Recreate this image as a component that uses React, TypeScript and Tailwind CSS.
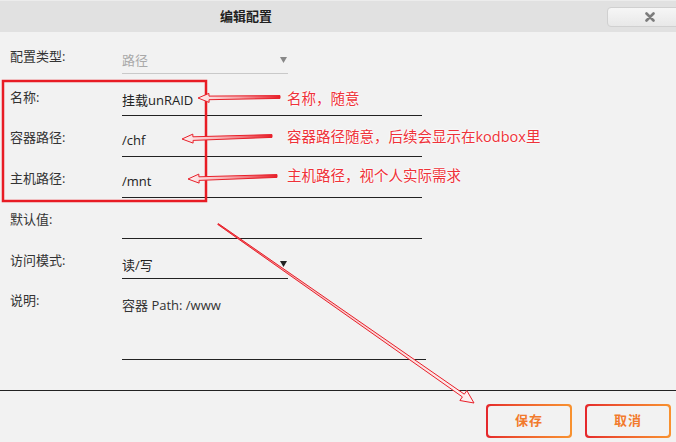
import type { ReactNode } from "react";

const FONT = {
  fontFamily: '"Open Sans", "Noto Sans CJK SC", "Liberation Sans", sans-serif',
};

type Pt = [number, number];

// hollow arrow: tip -> tail, tapering shaft
function arrowPoints(
  tip: Pt,
  tail: Pt,
  headLen: number,
  headHalf: number,
  shaftNear: number,
  shaftFar: number
) {
  const dx = tail[0] - tip[0];
  const dy = tail[1] - tip[1];
  const len = Math.hypot(dx, dy);
  const ux = dx / len;
  const uy = dy / len;
  const nx = -uy;
  const ny = ux;
  const bx = tip[0] + ux * headLen;
  const by = tip[1] + uy * headLen;
  const pts: Pt[] = [
    tip,
    [bx + nx * headHalf, by + ny * headHalf],
    [bx + nx * shaftNear, by + ny * shaftNear],
    [tail[0] + nx * shaftFar, tail[1] + ny * shaftFar],
    [tail[0] - nx * shaftFar, tail[1] - ny * shaftFar],
    [bx - nx * shaftNear, by - ny * shaftNear],
    [bx - nx * headHalf, by - ny * headHalf],
  ];
  return pts.map((p) => `${p[0].toFixed(1)},${p[1].toFixed(1)}`).join(" ");
}

function Arrow({ id, tip, tail, diag }: { id: string; tip: Pt; tail: Pt; diag?: boolean }) {
  return (
    <>
      <defs>
        <linearGradient
          id={id}
          gradientUnits="userSpaceOnUse"
          x1={tail[0]}
          y1={tail[1]}
          x2={tip[0]}
          y2={tip[1]}
        >
          <stop offset="0" stopColor={diag ? "#ec4a50" : "#e8202a"} />
          <stop offset={diag ? "0.35" : "0.5"} stopColor={diag ? "#f6c4c6" : "#f5a4a8"} />
          <stop offset="1" stopColor="#fdf1f1" />
        </linearGradient>
      </defs>
      <polygon
        points={
          diag
            ? arrowPoints(tip, tail, 13, 6, 1.7, 0.5)
            : arrowPoints(tip, tail, 11, 4.5, 1.8, 1.4)
        }
        fill={`url(#${id})`}
        stroke="#e8202a"
        strokeWidth={1}
        strokeLinejoin="miter"
      />
    </>
  );
}

function Note({ top, children }: { top: number; children: ReactNode }) {
  return (
    <div
      className="absolute left-[287px] text-[14.5px] leading-[18px] text-[#ee3239] [text-shadow:0_0_2px_#fff,0_0_3px_#fff,0_0_1px_#fff] whitespace-nowrap"
      style={{ top }}
    >
      {children}
    </div>
  );
}

function Caret({ color }: { color: string }) {
  return (
    <svg width="7" height="6" viewBox="0 0 7 6" className={color}>
      <path d="M0 0H7L3.5 6Z" fill="currentColor" />
    </svg>
  );
}

export default function App() {
  return (
    <div
      className="relative w-[676px] h-[442px] overflow-hidden bg-[#f2f2f2] text-[#333]"
      style={FONT}
    >
      {/* title bar */}
      <div className="h-[32px] flex items-center bg-[#e1e1e1] border-t border-[#ececec]">
        <div className="pl-[220px] text-[13px] font-semibold text-[#1f1f1f] leading-none">
          编辑配置
        </div>
        <button className="ml-auto -mr-[17px] shrink-0 w-[86px] h-[20px] rounded-[4px] border border-[#d0d0d0] bg-gradient-to-b from-[#f6f6f6] to-[#e8e8e8] flex items-center justify-center text-[#7c7c7c]">
          <svg width="10" height="10" viewBox="0 0 10 10">
            <path d="M1.5 1.5L8.5 8.5M8.5 1.5L1.5 8.5" stroke="currentColor" strokeWidth="2.6" strokeLinecap="round" />
          </svg>
        </button>
      </div>

      {/* form */}
      <div className="flex flex-col">
        <div className="flex h-[42px]">
          <div className="w-[122px] pl-[10px] pt-[16px] text-[13px] leading-[16px]">配置类型:</div>
          <div className="w-[166px] border-b border-[#c9c9c9] flex items-start justify-between pt-[20px] pr-[1px]">
            <span className="text-[13px] leading-[16px] text-[#a9a9a9]">路径</span>
            <span className="flex pt-[5px]">
              <Caret color="text-[#888]" />
            </span>
          </div>
        </div>

        <div className="flex h-[42px]">
          <div className="w-[122px] pl-[10px] pt-[15px] text-[13px] leading-[16px]">名称:</div>
          <div className="w-[300px] border-b border-[#222] pt-[18px] text-[13px] leading-[16px] text-[#222]">
            挂载unRAID
          </div>
        </div>

        <div className="flex h-[41px]">
          <div className="w-[122px] pl-[10px] pt-[13px] text-[13px] leading-[16px]">容器路径:</div>
          <div className="w-[300px] border-b border-[#222] pt-[16px] text-[13px] leading-[16px] text-[#222]">
            /chf
          </div>
        </div>

        <div className="flex h-[41px]">
          <div className="w-[122px] pl-[10px] pt-[13px] text-[13px] leading-[16px]">主机路径:</div>
          <div className="w-[300px] border-b border-[#222] pt-[16px] text-[13px] leading-[16px] text-[#222]">
            /mnt
          </div>
        </div>

        <div className="flex h-[41px]">
          <div className="w-[122px] pl-[10px] pt-[13px] text-[13px] leading-[16px]">默认值:</div>
          <div className="w-[300px] border-b border-[#222]" />
        </div>

        <div className="flex h-[40px]">
          <div className="w-[122px] pl-[10px] pt-[13px] text-[13px] leading-[16px]">访问模式:</div>
          <div className="w-[166px] border-b border-[#222] flex items-start justify-between pt-[18px] pr-[1px]">
            <span className="text-[13px] leading-[16px] text-[#222]">读/写</span>
            <span className="flex pt-[4px]">
              <Caret color="text-[#222]" />
            </span>
          </div>
        </div>

        <div className="flex h-[81px]">
          <div className="w-[122px] pl-[10px] pt-[13px] text-[13px] leading-[16px]">说明:</div>
          <div className="w-[304px] border-b border-[#222] pt-[18px] text-[13px] leading-[16px] text-[#333]">
            容器 Path: /www
          </div>
        </div>

        <div className="mt-[30px] h-px bg-[#222]" />

        <div className="flex justify-end gap-[13px] pr-[5px] mt-[13px]">
          {["保存", "取消"].map((t) => (
            <div
              key={t}
              className="w-[86px] h-[34px] rounded-[4px] p-[2px] bg-gradient-to-r from-[#e5262c] to-[#f8922f]"
            >
              <div className="w-full h-full rounded-[3px] bg-[#f2f2f2] flex items-center justify-center text-[13px] font-bold text-[#f27a2c] tracking-[1px]">
                {t}
              </div>
            </div>
          ))}
        </div>
      </div>

      {/* annotations */}
      <svg className="absolute inset-0 pointer-events-none" width="676" height="442">
        <rect x="3" y="81" width="203" height="120" fill="none" stroke="#e81c24" strokeWidth="2.5" />
        <Arrow id="a1" tip={[198, 98]} tail={[280, 97]} />
        <Arrow id="a2" tip={[182, 139]} tail={[272, 136]} />
        <Arrow id="a3" tip={[188, 179]} tail={[277, 176]} />
        <Arrow id="a4" tip={[474, 403]} tail={[218, 224]} diag />
      </svg>
      <Note top={90}>名称，随意</Note>
      <Note top={128}>容器路径随意，后续会显示在kodbox里</Note>
      <Note top={167}>主机路径，视个人实际需求</Note>
    </div>
  );
}
